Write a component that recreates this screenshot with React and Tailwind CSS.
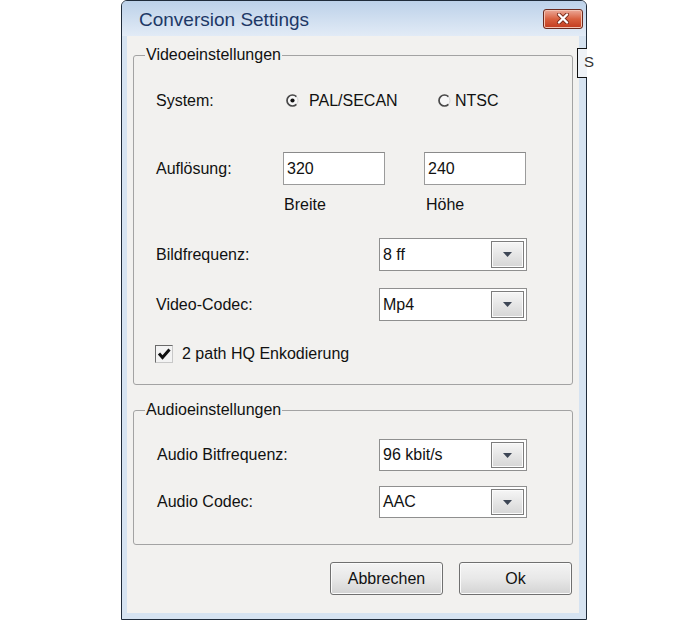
import React from 'react'

function Radio({ checked }) {
  return (
    <svg width="13" height="13" viewBox="0 0 13 13" className="shrink-0">
      <circle cx="6.5" cy="6.5" r="5.5" fill="#f7f7f7" stroke="#d2d2d2" />
      <path d="M10.4 2.6 A5.5 5.5 0 1 0 10.4 10.4" fill="none" stroke="#4a4a4a" strokeWidth="1.7" />
      {checked && <circle cx="6.5" cy="6.5" r="2.1" fill="#111" />}
    </svg>
  )
}

function Select({ value, h = 'h-[33px]' }) {
  return (
    <div className={`flex ${h} w-[148px] items-stretch border border-[#8f8f8f] bg-white p-[2px]`}>
      <span className="flex flex-1 items-center pl-[1px]">{value}</span>
      <span className="flex w-[33px] items-center justify-center border border-[#7d7d7d] bg-linear-to-b from-[#f6f6f6] to-[#d6d6d6] shadow-[inset_0_0_0_1px_#fbfbfb]">
        <svg width="9" height="5" viewBox="0 0 9 5">
          <path d="M0 0 H9 L4.5 5 Z" fill="#3d4655" />
        </svg>
      </span>
    </div>
  )
}

function TextBox({ value }) {
  return (
    <div className="flex h-[33px] w-[102px] items-center border border-[#9b9b9b] border-t-[#8a8a8a] bg-white pl-[3px]">
      {value}
    </div>
  )
}

function Button({ children }) {
  return (
    <button className="flex h-[33px] w-[113px] items-center justify-center rounded-[3px] border border-[#707070] bg-linear-to-b from-[#f4f4f4] via-[#e8e8e8] to-[#d3d3d3] shadow-[inset_0_0_0_1px_#fbfbfb] text-[16px] text-[#111]">
      {children}
    </button>
  )
}

export default function App() {
  return (
    <div className="relative h-[623px] w-[680px] overflow-hidden bg-white font-['Liberation_Sans',Arial,sans-serif] text-[16px] leading-[18px] text-[#111]">
      <div className="ml-[121px] flex h-[620px] w-[466px] flex-col rounded-t-[6px] border border-[#1f2b3a] bg-[#d6e3f1]">
        {/* title bar */}
        <div className="flex h-[35px] items-center justify-between rounded-t-[5px] bg-linear-to-b from-[#bcd1e9] to-[#e2ebf6] pl-[17px] pr-[3px]">
          <span className="pt-[2px] text-[19px] leading-[22px] text-[#1d3866]">Conversion Settings</span>
          <div className="flex h-[20px] w-[40px] items-center justify-center rounded-[3px] border border-[#6b2a1e] bg-linear-to-b from-[#eba897] via-[#d8603f] to-[#c23a1c] shadow-[inset_0_0_0_1px_#f3c2b2]">
            <svg width="14" height="11" viewBox="0 0 14 11">
              <path d="M3 1.5 L11 9.5 M11 1.5 L3 9.5" stroke="#7a2a1a" strokeWidth="4" strokeLinecap="round" />
              <path d="M3 1.5 L11 9.5 M11 1.5 L3 9.5" stroke="#ffffff" strokeWidth="2.4" strokeLinecap="round" />
            </svg>
          </div>
        </div>

        {/* content */}
        <div className="ml-[5px] flex h-[577px] w-[452px] flex-col bg-[#f2f1ef] pt-[10px]">
          <fieldset className="ml-[6px] w-[440px] rounded-[3px] border border-[#a3a3a3] pb-[21px]">
            <legend className="ml-[11px] px-[1px]">Videoeinstellungen</legend>

            <div className="mt-[20px] flex h-[33px] items-center pl-[22px]">
              <span className="w-[128px]">System:</span>
              <div className="flex w-[154px] items-center gap-[10px] pl-[2px]">
                <Radio checked />
                <span>PAL/SECAN</span>
              </div>
              <div className="flex items-center gap-[4px]">
                <Radio />
                <span>NTSC</span>
              </div>
            </div>

            <div className="mt-[35px] flex h-[33px] items-center pl-[22px]">
              <span className="w-[127px]">Auflösung:</span>
              <TextBox value="320" />
              <div className="ml-[39px]">
                <TextBox value="240" />
              </div>
            </div>

            <div className="mt-[11px] flex h-[18px] items-center pl-[22px]">
              <span className="w-[128px]" />
              <span className="w-[142px]">Breite</span>
              <span>Höhe</span>
            </div>

            <div className="mt-[24px] flex h-[33px] items-center pl-[22px]">
              <span className="w-[223px]">Bildfrequenz:</span>
              <Select value="8 ff" />
            </div>

            <div className="mt-[17px] flex h-[33px] items-center pl-[22px]">
              <span className="w-[223px]">Video-Codec:</span>
              <Select value="Mp4" />
            </div>

            <div className="mt-[24px] flex h-[18px] items-center gap-[9px] pl-[21px]">
              <span className="flex h-[18px] w-[18px] items-center justify-center border border-[#c8c8c8] border-l-[#6a6a6a] border-t-[#6a6a6a] bg-[#f3f3f3]">
                <svg width="14" height="12" viewBox="0 0 14 12">
                  <path d="M2 5.5 L5.5 9.5 L12.5 1.5" fill="none" stroke="#111" strokeWidth="3" />
                </svg>
              </span>
              <span>2 path HQ Enkodierung</span>
            </div>
          </fieldset>

          <fieldset className="ml-[6px] mt-[16px] w-[440px] rounded-[3px] border border-[#a3a3a3] pb-[26px]">
            <legend className="ml-[11px] px-[1px]">Audioeinstellungen</legend>

            <div className="mt-[20px] flex h-[32px] items-center pl-[23px]">
              <span className="w-[222px]">Audio Bitfrequenz:</span>
              <Select value="96 kbit/s" h="h-[32px]" />
            </div>

            <div className="mt-[15px] flex h-[32px] items-center pl-[23px]">
              <span className="w-[222px]">Audio Codec:</span>
              <Select value="AAC" h="h-[32px]" />
            </div>
          </fieldset>

          <div className="mt-[17px] flex justify-end gap-[16px] pr-[7px]">
            <Button>Abbrechen</Button>
            <Button>Ok</Button>
          </div>
        </div>
      </div>

      {/* bit of a window peeking out behind the right frame */}
      <div className="absolute left-[577px] top-[48px] h-[30px] w-[10px] border border-r-0 border-[#111] bg-[#eef2f7]" />
      <span className="absolute left-[584px] top-[53px] text-[15px] text-[#333]">S</span>
    </div>
  )
}
